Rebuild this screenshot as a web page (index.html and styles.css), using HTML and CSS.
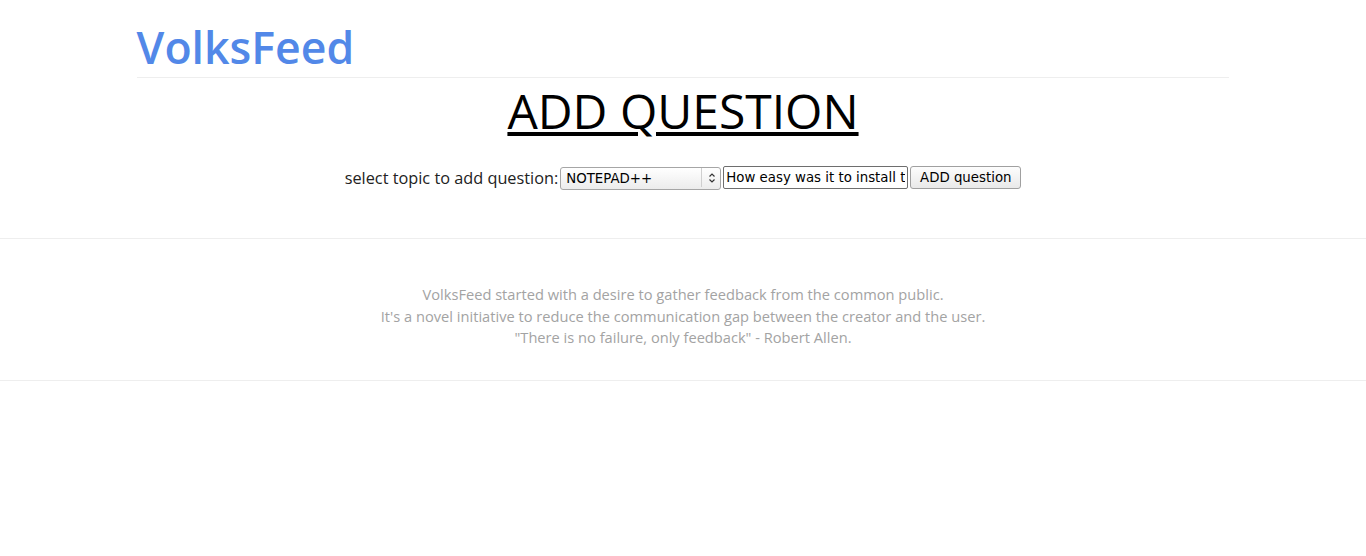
FILE: index.html
```html
<!DOCTYPE html>
<html lang="en">
<head>
<meta charset="utf-8">
<title>VolksFeed - Add Question</title>
<link rel="stylesheet" href="styles.css">
</head>
<body>
<div class="container">
  <header class="site-header">
    <h1 class="brand">VolksFeed</h1>
  </header>
  <h2 class="page-title">ADD QUESTION</h2>
  <form class="add-form">
    <label class="add-label" for="topic">select topic to add question:</label>
    <span class="select-wrap">
      <select id="topic" class="topic-select">
        <option>NOTEPAD++</option>
      </select>
      <span class="select-arrow" aria-hidden="true">
        <svg width="8" height="12" viewBox="0 0 8 12"><path d="M1.5 4.5 L4 2 L6.5 4.5 M1.5 7.5 L4 10 L6.5 7.5" fill="none" stroke="#333" stroke-width="1.2"/></svg>
      </span>
    </span>
    <input class="question-input" type="text" value="How easy was it to install the software?">
    <button class="add-btn" type="button">ADD question</button>
  </form>
</div>
<footer class="site-footer">
  <p>VolksFeed started with a desire to gather feedback from the common public.<br>
  It's a novel initiative to reduce the communication gap between the creator and the user.<br>
  "There is no failure, only feedback" - Robert Allen.</p>
</footer>
</body>
</html>
```
FILE: styles.css
```css
html, body {
  margin: 0;
  padding: 0;
  background: #fff;
}
body {
  font-family: "Open Sans", "DejaVu Sans", sans-serif;
  color: #333;
}
.container {
  width: 80%;
  margin: 0 auto;
}
.site-header {
  border-bottom: 1px solid #eee;
  padding: 22px 0 5px;
}
.brand {
  margin: 0;
  font-size: 44.6px;
  line-height: 50px;
  font-weight: 600;
  color: #5288e8;
}
.page-title {
  margin: 5px 0 0;
  text-align: center;
  font-size: 48px;
  line-height: 56px;
  font-weight: 400;
  color: #000;
  text-decoration: underline;
}
.add-form {
  display: flex;
  justify-content: center;
  align-items: center;
  gap: 2px;
  height: 23px;
  margin: 27px 0 49px;
}
.add-label {
  font-size: 16.3px;
  color: #222;
}
.select-wrap {
  position: relative;
  display: inline-block;
  width: 161px;
  height: 23px;
}
.topic-select {
  -webkit-appearance: none;
  appearance: none;
  box-sizing: border-box;
  width: 161px;
  height: 23px;
  margin: 0;
  padding: 0 24px 0 5px;
  border: 1px solid #a6a6a6;
  border-radius: 3px;
  background: linear-gradient(#ffffff, #ececec);
  font-family: "DejaVu Sans", sans-serif;
  font-size: 13.33px;
  color: #000;
}
.select-arrow {
  position: absolute;
  top: 2px;
  right: 0;
  width: 19px;
  height: 19px;
  border-left: 1px solid #cfcfcf;
  display: flex;
  align-items: center;
  justify-content: center;
  pointer-events: none;
}
.question-input {
  box-sizing: border-box;
  width: 185px;
  height: 23px;
  margin: 0;
  padding: 1px 2px;
  border: 1px solid #6e6e6e;
  border-radius: 2px;
  font-family: "DejaVu Sans", sans-serif;
  font-size: 13.33px;
  color: #000;
}
.add-btn {
  box-sizing: border-box;
  width: 111px;
  height: 23px;
  margin: 0;
  padding: 0 6px;
  border: 1px solid #a0a0a0;
  border-radius: 3px;
  background: linear-gradient(#fdfdfd, #e9e9e9);
  font-family: "DejaVu Sans", sans-serif;
  font-size: 13.33px;
  color: #000;
}
.site-footer {
  border-top: 1px solid #eee;
  border-bottom: 1px solid #eee;
  padding: 45px 0 31px;
  text-align: center;
}
.site-footer p {
  margin: 0;
  font-size: 14.65px;
  line-height: 21.5px;
  font-weight: 400;
  color: #a3a3a3;
}
```
